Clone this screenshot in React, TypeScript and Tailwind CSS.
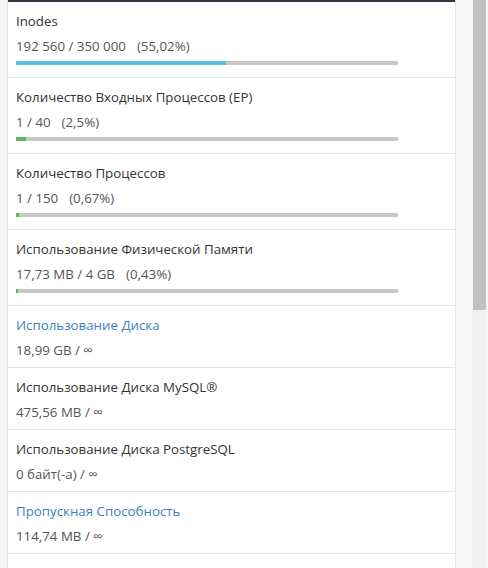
const stats = [
  { title: "Inodes", value: "192 560 / 350 000", pct: "(55,02%)", fill: 55.02, color: "bg-[#5bc0de]" },
  { title: "Количество Входных Процессов (EP)", value: "1 / 40", pct: "(2,5%)", fill: 2.5, color: "bg-[#5cb85c]" },
  { title: "Количество Процессов", value: "1 / 150", pct: "(0,67%)", fill: 0.67, color: "bg-[#5cb85c]" },
  { title: "Использование Физической Памяти", value: "17,73 MB / 4 GB", pct: "(0,43%)", fill: 0.43, color: "bg-[#5cb85c]" },
  { title: "Использование Диска", value: "18,99 GB / ∞", link: true },
  { title: "Использование Диска MySQL®", value: "475,56 MB / ∞" },
  { title: "Использование Диска PostgreSQL", value: "0 байт(-а) / ∞" },
  { title: "Пропускная Способность", value: "114,74 MB / ∞", link: true },
  { title: "Адреса Электронной Почты", value: "0 / ∞" },
]

type Stat = {
  title: string
  value: string
  pct?: string
  fill?: number
  color?: string
  link?: boolean
}

const StatRow = ({ stat, first }: { stat: Stat; first?: boolean }) => {
  const hasBar = stat.fill !== undefined
  return (
    <div
      className={`border-b border-[#e3e3e3] px-2 ${first ? "pt-[9px]" : "pt-[9px]"} ${
        hasBar ? "pb-[12px]" : "pb-[7px]"
      }`}
    >
      <div className={`text-[13.3px] leading-5 ${stat.link ? "text-[#3f7fbf]" : "text-[#333]"}`}>
        {stat.title}
      </div>
      <div className="mt-[5px] text-[13.3px] leading-5 text-[#555]">
        {stat.value}
        {stat.pct && <span className="ml-[11px]">{stat.pct}</span>}
      </div>
      {hasBar && (
        <div className="mt-[5px] h-[4px] w-[382px] bg-[#c8c8c8]">
          <div className={`h-full ${stat.color}`} style={{ width: `${Math.max(stat.fill!, 0.4)}%` }} />
        </div>
      )}
    </div>
  )
}

export default function App() {
  return (
    <div
      className="flex h-[568px] w-[488px] overflow-hidden bg-[#f7f7f7]"
      style={{ fontFamily: '"Open Sans", "Noto Sans", sans-serif' }}
    >
      <div className="w-[8px] shrink-0 border-r border-[#e6e6e6] bg-[#f7f7f7]" />
      <div className="w-[448px] shrink-0 border-r border-[#e6e6e6] bg-white">
        <div className="h-[2px] bg-[#2d3843]" />
        {stats.map((s, i) => (
          <StatRow key={s.title} stat={s} first={i === 0} />
        ))}
      </div>
      <div className="w-[16px] shrink-0 bg-[#f8f8f8]" />
      <div className="flex w-[15px] shrink-0 justify-center bg-[#f1f1f1]">
        <div className="h-[310px] w-[13px] bg-[#c1c1c1]" />
      </div>
    </div>
  )
}
